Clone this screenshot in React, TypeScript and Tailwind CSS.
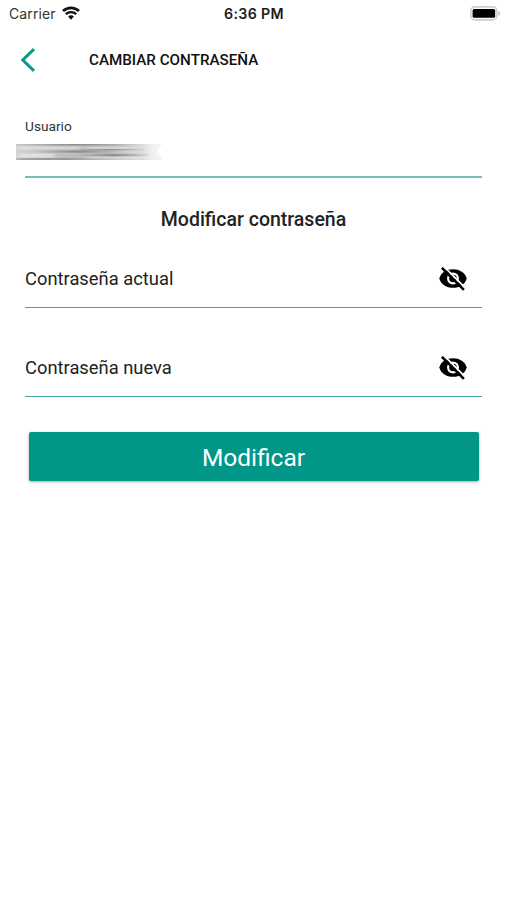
type PasswordFieldProps = {
    label: string;
};

function StatusBar() {
    return (
        <div className="grid h-7 grid-cols-3 items-center pr-1.5 pl-[9px] font-['Inter',sans-serif]">
            <div className="flex items-center gap-[6px]">
                <span className="text-[14px] leading-none tracking-[0.1px] text-[#333]">
                    Carrier
                </span>
                <svg className="-mt-[3px]" width="18" height="14" viewBox="0 0 18 14" fill="none">
                    <path
                        d="M1 5C5.5 .7 12.5 .7 17 5"
                        stroke="#111"
                        strokeWidth="2.7"
                    />
                    <path
                        d="M3.8 8.2C6.7 5.4 11.3 5.4 14.2 8.2"
                        stroke="#111"
                        strokeWidth="2.4"
                    />
                    <path d="M6.1 10.5c1.7-1.6 4.1-1.6 5.8 0L9 13.7z" fill="#111" />
                </svg>
            </div>
            <span className="-ml-[2px] pt-px text-center text-[14.2px] leading-none font-semibold tracking-[0.35px] whitespace-nowrap text-[#1a1a1a]">
                6:36 PM
            </span>
            <svg
                className="-mt-[2px] justify-self-end"
                width="31"
                height="15"
                viewBox="0 0 31 15"
            >
                <rect x=".8" y=".9" width="26" height="13" rx="4" fill="#fff" stroke="#cfcfcf" strokeWidth="1.6" />
                <rect x="2.6" y="3" width="22.6" height="8.8" rx="1.5" fill="#000" />
                <path d="M28.4 5.2c2.3.6 2.3 4 0 4.6z" fill="#bdbdbd" />
            </svg>
        </div>
    );
}

// Smeared strip that hides the user name
function HiddenUser() {
    return (
        <svg className="-ml-[9px]" width="147" height="16" viewBox="0 0 147 16">
            <defs>
                <linearGradient id="base">
                    <stop offset="0" stopColor="#d2d2d2" />
                    <stop offset=".35" stopColor="#bdbdbd" />
                    <stop offset=".65" stopColor="#c2c2c2" />
                    <stop offset=".86" stopColor="#dedede" />
                    <stop offset=".92" stopColor="#efefef" />
                    <stop offset="1" stopColor="#f6f6f6" />
                </linearGradient>
                <linearGradient id="streak">
                    <stop offset="0" stopColor="#777" stopOpacity=".1" />
                    <stop offset=".5" stopColor="#777" stopOpacity=".7" />
                    <stop offset="1" stopColor="#777" stopOpacity="0" />
                </linearGradient>
                <filter id="soft" x="-5%" y="-20%" width="110%" height="140%">
                    <feGaussianBlur stdDeviation="2.5 .7" />
                </filter>
            </defs>
            <path d="M0 0H146L141 7L147 16H0z" fill="url(#base)" />
            <g filter="url(#soft)">
                <rect x="2" y="2.5" width="62" height="3" fill="#eee" opacity=".5" />
                <rect x="2" y="9.5" width="36" height="4" fill="#eee" opacity=".6" />
                <rect x="70" y="3" width="42" height="1.8" fill="#eee" opacity=".4" />
                <rect x="72" y="12.8" width="60" height="2" fill="#eee" opacity=".4" />
                <rect x="0" y="0" width="125" height="1.5" fill="url(#streak)" />
                <rect x="22" y="6.4" width="82" height="2.3" fill="url(#streak)" />
                <rect x="58" y="5" width="74" height="1.3" fill="url(#streak)" />
                <rect x="62" y="9.8" width="74" height="2.4" fill="url(#streak)" />
                <rect x="0" y="14.2" width="94" height="1.6" fill="url(#streak)" />
                <rect x="0" y="14.4" width="36" height="1.4" fill="#888" opacity=".6" />
            </g>
        </svg>
    );
}

function EyeOffIcon() {
    return (
        <svg width="28" height="24" viewBox="0 0 28 24" fill="none">
            <path
                d="M.3 11.5C1.8 5.6 7.4 2.2 14 2.2s12.2 3.4 13.7 9.3C26.2 17.4 20.6 20.8 14 20.8S1.8 17.4.3 11.5z"
                fill="#000"
            />
            <circle cx="14" cy="11.5" r="6" fill="#fff" />
            <circle cx="14" cy="11.5" r="3.8" fill="#000" />
            <circle cx="14.6" cy="10.8" r="1.3" fill="#bbb" />
            <path d="M4.7 -.6L27 21.7" stroke="#fff" strokeWidth="1.8" />
            <path d="M2.9 .8L24.9 22.8" stroke="#000" strokeWidth="2.5" />
        </svg>
    );
}

function PasswordField({ label }: PasswordFieldProps) {
    return (
        <div className="flex h-[59px] items-center justify-between border-b border-[#3fa79c] pr-[15px]">
            <span className="pt-px text-[18.35px] text-[#222]">{label}</span>
            <button type="button" aria-label={label} className="pt-[2px]">
                <EyeOffIcon />
            </button>
        </div>
    );
}

export default function App() {
    return (
        <div className="min-h-[900px] bg-white font-['Roboto',sans-serif]">
            <StatusBar />

            <header className="flex h-16 items-center pl-5">
                <button type="button" aria-label="Volver">
                    <svg width="16" height="24" viewBox="0 0 16 24" fill="none">
                        <path
                            d="M14 1.2L2.8 12L14 22.8"
                            stroke="#0c9787"
                            strokeWidth="3"
                        />
                    </svg>
                </button>
                <h1 className="ml-[53px] text-[15.2px] font-medium text-[#111]">
                    CAMBIAR CONTRASEÑA
                </h1>
            </header>

            <main className="px-[25px]">
                <div className="flex h-[86px] flex-col border-b-2 border-[#72c0b8] pt-[25px]">
                    <span className="mb-[9px] text-[13.7px] leading-[18px] text-[#333]">
                        Usuario
                    </span>
                    <HiddenUser />
                </div>

                <h2 className="pt-[28px] pb-[15px] text-center text-[19.5px] leading-7 font-medium text-[#222]">
                    Modificar contraseña
                </h2>

                <div className="flex flex-col gap-[30px]">
                    <PasswordField label="Contraseña actual" />
                    <PasswordField label="Contraseña nueva" />
                </div>

                <button
                    type="button"
                    className="mx-[3.5px] mt-[35px] flex h-[49px] w-[450px] items-center justify-center rounded-[2px] bg-[#009688] pt-[3px] text-[24.5px] text-white shadow-[0_1px_3px_rgba(0,0,0,0.35)]"
                >
                    Modificar
                </button>
            </main>
        </div>
    );
}
